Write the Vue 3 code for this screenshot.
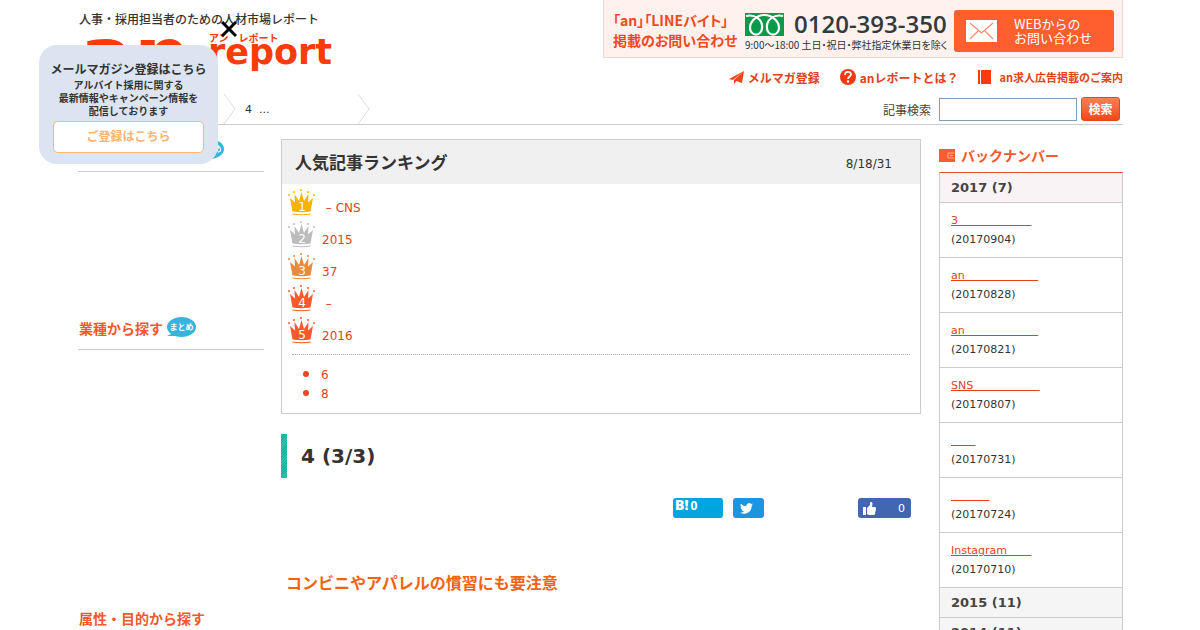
<script setup>
const pad = (n) => '\u00a0'.repeat(n)

const ranking = [
  { n: 1, text: '\u00a0– CNS', color: '#f9b200' },
  { n: 2, text: '2015', color: '#bcbcbc' },
  { n: 3, text: '37', color: '#e98a3c' },
  { n: 4, text: '\u00a0–', color: '#f95a2b' },
  { n: 5, text: '2016', color: '#f95a2b' },
]
const others = ['6', '8']
const issues = [
  { text: '3' + pad(21), date: '(20170904)' },
  { text: 'an' + pad(21), date: '(20170828)' },
  { text: 'an' + pad(21), date: '(20170821)' },
  { text: 'SNS' + pad(19), date: '(20170807)' },
  { text: pad(7), date: '(20170731)' },
  { text: pad(11), date: '(20170724)' },
  { text: 'Instagram' + pad(7), date: '(20170710)' },
]
const dots = [[1, 6], [6, 3], [13, 1], [20, 3], [26, 6]]
</script>

<template>
  <div class="page">
    <header class="header">
      <div class="brand">
        <p class="tagline">人事・採用担当者のための人材市場レポート</p>
        <a class="logo" href="#" aria-label="an report">
          <span class="logo-an">an</span>
          <span class="logo-side">
            <span class="logo-kana"><span>アン</span><span>レポート</span></span>
            <span class="logo-report">report</span>
          </span>
        </a>
      </div>
      <div class="header-right">
        <div class="contact">
          <p class="contact-lead">「an」「LINEバイト」<br>掲載のお問い合わせ</p>
          <div class="phone">
            <div class="phone-line">
              <svg width="39" height="23" viewBox="0 0 39 23" aria-hidden="true">
                <rect width="39" height="23" fill="#0a9a4a" />
                <path d="M1 3C9 1 18 6 17 15a5.500 6 0 0 1-12 0C5 8 12 2 19.500 2S34 8 34 15a5.500 6 0 0 1-12 0C21 6 30 1 38 3" fill="none" stroke="#fff" stroke-width="2.200" />
              </svg>
              <span class="phone-number">0120-393-350</span>
            </div>
            <p class="hours"><span>9:00〜18:00</span><span>土日・祝日・弊社指定休業日を除く</span></p>
          </div>
          <a class="web" href="#">
            <svg width="31" height="22" viewBox="0 0 31 22" aria-hidden="true">
              <rect width="31" height="22" fill="#fff" />
              <path d="M4 3l11.500 10L27 3M4 19l8-8M27 19l-8-8" fill="none" stroke="#f58a6c" stroke-width="1.200" />
            </svg>
            <span>WEBからの<br>お問い合わせ</span>
          </a>
        </div>
        <nav class="nav">
          <a href="#">
            <svg width="15" height="13" viewBox="0 0 15 13" aria-hidden="true">
              <path d="M15 0L0 8l4 1zM15 0L5 9v4l2.500-3L13 12z" fill="#f0441a" />
            </svg>
            メルマガ登録
          </a>
          <a href="#">
            <svg width="16" height="16" viewBox="0 0 16 16" aria-hidden="true">
              <circle cx="8" cy="8" r="8" fill="#f0380c" />
              <path d="M5 6c0-4 6-4 6-.5C11 7.500 8 7.500 8 10" fill="none" stroke="#fff" stroke-width="1.800" />
              <circle cx="8" cy="12.500" r="1.200" fill="#fff" />
            </svg>
            anレポートとは？
          </a>
          <a class="small" href="#">
            <svg width="13" height="14" viewBox="0 0 13 14" aria-hidden="true">
              <path d="M0 0h2v14H0zM3 0h10v14H3z" fill="#f93c0a" />
            </svg>
            an求人広告掲載のご案内
          </a>
        </nav>
      </div>
    </header>

    <div class="subbar">
      <nav class="crumbs" aria-label="breadcrumb">
        <svg width="13" height="30" viewBox="0 0 13 30" aria-hidden="true"><path d="M1 0l11 15L1 30" /></svg>
        <span class="crumb">4&nbsp; ...</span>
        <svg width="13" height="30" viewBox="0 0 13 30" aria-hidden="true"><path d="M1 0l11 15L1 30" /></svg>
      </nav>
      <form class="search" @submit.prevent>
        <label for="q">記事検索</label>
        <input id="q" type="text">
        <button type="submit">検索</button>
      </form>
    </div>

    <div class="columns">
      <aside class="left">
        <div class="finder first">
          <span class="bubble">まとめ</span>
        </div>
        <div class="finder second">
          <h2>業種から探す</h2>
          <span class="bubble">まとめ</span>
        </div>
        <div class="finder third">
          <h2>属性・目的から探す</h2>
        </div>
      </aside>

      <main class="main">
        <section class="ranking">
          <div class="ranking-head">
            <h2>人気記事ランキング</h2>
            <span>8/18/31</span>
          </div>
          <ol class="crowns">
            <li v-for="r in ranking" :key="r.n">
              <svg width="28" height="27" viewBox="0 0 28 27" :fill="r.color" aria-hidden="true">
                <circle v-for="d in dots" :key="d[0]" :cx="d[0]" :cy="d[1]" r="1" />
                <path d="M2 9l5 4.500L6.500 5l4.500 7L13.500 3 16 12l4.500-7-.5 8.500L25 9l-2.500 13.500q-9 1.500-18 0z" />
                <path d="M4.500 24.500q9 1.500 18 0v1q-9 1.500-18 0z" />
                <text x="14" y="22" text-anchor="middle">{{ r.n }}</text>
              </svg>
              <a href="#">{{ r.text }}</a>
            </li>
          </ol>
          <ul class="others">
            <li v-for="o in others" :key="o"><a href="#">{{ o }}</a></li>
          </ul>
        </section>

        <h1 class="title">4 (3/3)</h1>

        <div class="share">
          <button class="hatena" type="button"><b>B!</b><span>0</span></button>
          <button class="twitter" type="button" aria-label="Twitter">
            <svg width="13" height="11" viewBox="0 0 24 20" fill="#fff" aria-hidden="true">
              <path d="M24 2.400a10 10 0 0 1-2.800.8A5 5 0 0 0 23.300.5a10 10 0 0 1-3.100 1.200A4.900 4.900 0 0 0 11.800 6 14 14 0 0 1 1.700 1a4.900 4.900 0 0 0 1.500 6.600A5 5 0 0 1 1 7a4.900 4.900 0 0 0 4 4.900 5 5 0 0 1-2.300.1 4.900 4.900 0 0 0 4.600 3.400A10 10 0 0 1 0 17.500 14 14 0 0 0 21.500 5 10 10 0 0 0 24 2.400z" />
            </svg>
          </button>
          <button class="facebook" type="button" aria-label="Like 0">
            <svg width="13" height="13" viewBox="0 0 13 13" fill="#fff" aria-hidden="true">
              <path d="M0 5h3v8H0zM4 6l3-3V1c0-1.500 2.500-1.200 2.500 1L9 5h3q1 .2 1 1.500L12 12q-.3 1-1.500 1H6l-2-1z" />
            </svg>
            <span>0</span>
          </button>
        </div>

        <h2 class="lead">コンビニやアパレルの慣習にも要注意</h2>
      </main>

      <aside class="right">
        <h2>
          <svg width="16" height="13" viewBox="0 0 16 13" aria-hidden="true">
            <path d="M0 0h16v13H0z" fill="#fa5c32" />
            <path d="M15 4H9v5h6M11 6.500h3" fill="none" stroke="#fdb49a" />
          </svg>
          バックナンバー
        </h2>
        <div class="archive">
          <h3 class="current">2017 (7)</h3>
          <ul>
            <li v-for="i in issues" :key="i.date">
              <a href="#">{{ i.text }}</a>
              <span>{{ i.date }}</span>
            </li>
          </ul>
          <h3>2015 (11)</h3>
          <h3>2014 (11)</h3>
        </div>
      </aside>
    </div>

    <div class="popup">
      <button class="close" type="button" aria-label="閉じる">
        <svg width="16" height="16" viewBox="0 0 16 16" aria-hidden="true"><path d="M1 1l14 14M15 1L1 15" stroke="#000" stroke-width="3" /></svg>
      </button>
      <p class="popup-title">メールマガジン登録はこちら</p>
      <p class="popup-text">アルバイト採用に関する<br>最新情報やキャンペーン情報を<br>配信しております</p>
      <a class="popup-button" href="#">ご登録はこちら</a>
    </div>
  </div>
</template>

<style>
body {
  background: #fff;
}
</style>

<style scoped>
* {
  box-sizing: border-box;
  margin: 0;
  padding: 0;
}
.page {
  position: relative;
  height: 100vh;
  overflow: hidden;
  padding: 0 77px 0 78px;
  color: #333;
  font-family: "DejaVu Sans", "Noto Sans CJK JP", sans-serif;
  font-size: 12px;
}
a {
  color: #e0431a;
  text-decoration: none;
}
ul,
ol {
  list-style: none;
}
button {
  border: 0;
  cursor: pointer;
  font-family: inherit;
}
svg {
  flex: none;
}
.tagline,
.contact,
.nav,
.search,
.finder,
.ranking-head h2,
.lead,
.right h2,
.popup {
  font-family: "Noto Sans CJK JP", sans-serif;
}
.header {
  display: flex;
  justify-content: space-between;
  height: 94px;
}
.tagline {
  padding: 10px 0 0 1px;
  font-size: 12px;
  font-weight: 500;
  line-height: 18px;
}
.logo {
  display: flex;
  height: 50px;
  padding-left: 2px;
  color: #fa3c08;
  font-weight: bold;
}
.logo-an {
  width: 128px;
  font-size: 80px;
  line-height: 58px;
}
.logo-side {
  padding-top: 3px;
}
.logo-kana {
  display: flex;
  gap: 10px;
  padding-left: 1px;
  font-family: "Noto Sans CJK JP", sans-serif;
  font-size: 10px;
  line-height: 14px;
}
.logo-report {
  display: block;
  margin-top: -13px;
  font-size: 35px;
  line-height: 40px;
}
.contact {
  display: flex;
  height: 58px;
  padding: 10px 8px 0 9px;
  background: #fff1ee;
  border: solid #f3d9d2;
  border-width: 0 1px 1px;
}
.contact-lead {
  width: 132px;
  color: #f04a1c;
  font-size: 14px;
  font-weight: bold;
  line-height: 20px;
  font-feature-settings: "palt";
  white-space: nowrap;
}
.phone {
  width: 209px;
}
.phone-line {
  display: flex;
  align-items: center;
  gap: 10px;
  height: 28px;
}
.phone-number {
  color: #333a3c;
  font-family: "Open Sans", sans-serif;
  font-size: 24px;
  font-weight: 600;
  line-height: 28px;
}
.hours {
  display: flex;
  gap: 2px;
  font-size: 10px;
  line-height: 14px;
  font-feature-settings: "palt";
  white-space: nowrap;
}
.web {
  display: flex;
  align-items: center;
  gap: 17px;
  width: 160px;
  height: 42px;
  padding-left: 12px;
  background: #ff5e2f;
  border-radius: 3px;
  color: #fff;
  font-size: 13px;
  line-height: 14px;
  white-space: nowrap;
}
.nav {
  display: flex;
  justify-content: flex-end;
  gap: 20px;
  height: 38px;
  align-items: center;
}
.nav a {
  display: flex;
  align-items: center;
  gap: 4px;
  font-size: 12px;
  font-weight: bold;
}
.nav .small {
  gap: 8px;
  font-size: 11px;
}
.subbar {
  display: flex;
  justify-content: space-between;
  height: 31px;
  border-bottom: 1px solid #ccc;
}
.crumbs {
  display: flex;
  align-items: center;
  padding-left: 145px;
  font-size: 11px;
}
.crumbs path {
  fill: none;
  stroke: #ddd;
}
.crumb {
  width: 121px;
  padding-left: 9px;
}
.search {
  display: flex;
  align-items: center;
  padding-right: 3px;
}
.search label {
  margin-right: 8px;
  color: #444;
}
.search input {
  width: 138px;
  height: 23px;
  margin-right: 4px;
  border: 1px solid #7f9db9;
}
.search button {
  width: 39px;
  height: 24px;
  background: linear-gradient(#fa8058, #ee4a1a);
  border: 1px solid #e2481c;
  border-radius: 3px;
  color: #fff;
  font-size: 12px;
  font-weight: bold;
  line-height: 20px;
}
.columns {
  display: grid;
  grid-template-columns: 186px minmax(0, 1fr) 184px;
  column-gap: 18px;
  padding-top: 14px;
}
.finder {
  display: flex;
  align-items: flex-start;
  gap: 4px;
  border-bottom: 1px solid #ccc;
}
.finder h2 {
  padding-left: 1px;
  color: #f4592b;
  font-size: 14px;
  line-height: 18px;
}
.first {
  height: 33px;
  padding-left: 117px;
}
.second {
  height: 178px;
  padding-top: 147px;
}
.third {
  height: 290px;
  padding-top: 259px;
}
.bubble {
  position: relative;
  width: 29px;
  height: 20px;
  background: #35b4dc;
  border-radius: 50%;
  color: #fff;
  font-size: 8px;
  font-weight: bold;
  line-height: 19px;
  text-align: center;
}
.bubble::before {
  position: absolute;
  bottom: 1px;
  left: 0;
  border: solid transparent;
  border-width: 3px 0 1px 8px;
  border-bottom: 4px solid #35b4dc;
  content: "";
}
.second .bubble {
  margin-top: -2px;
}
.main {
  margin-left: -1px;
}
.ranking {
  height: 275px;
  border: 1px solid #ccc;
}
.ranking-head {
  display: flex;
  align-items: center;
  justify-content: space-between;
  height: 44px;
  padding: 0 28px 0 13px;
  background: #f0f0f0;
}
.ranking-head h2 {
  padding-bottom: 2px;
  font-size: 17px;
  font-weight: bold;
}
.ranking-head span {
  padding-top: 4px;
}
.crowns {
  margin: 0 10px;
  padding: 5px 0;
  border-bottom: 1px dotted #aaa;
}
.crowns li {
  display: flex;
  gap: 6px;
  height: 32px;
  margin-left: -4px;
}
.crowns a {
  padding-top: 4px;
  line-height: 30px;
}
.crowns text {
  fill: #fff;
  font-size: 12px;
}
.others {
  padding: 10px 0 0 21px;
}
.others li {
  display: flex;
  align-items: center;
  height: 19px;
}
.others li::before {
  width: 6px;
  height: 6px;
  margin: 0 12px 2px 0;
  background: #e8481c;
  border-radius: 50%;
  content: "";
}
.title {
  position: relative;
  margin-top: 20px;
  padding-left: 20px;
  font-size: 20px;
  line-height: 44px;
}
.title::before {
  position: absolute;
  inset: 0 auto 0 0;
  width: 6px;
  background: repeating-linear-gradient(135deg, #10b39c 0 1px, #35c2ac 1px 2px);
  content: "";
}
.share {
  display: flex;
  justify-content: flex-end;
  margin-top: 20px;
  padding-right: 10px;
  color: #fff;
}
.share button {
  display: flex;
  align-items: center;
  height: 20px;
  border-radius: 3px;
  color: #fff;
}
.share .hatena {
  align-items: flex-start;
  gap: 2px;
  width: 50px;
  margin-right: 10px;
  padding-left: 2px;
  background: #00a4de;
  font-family: "Open Sans", sans-serif;
  font-size: 12px;
  font-weight: bold;
  line-height: 15px;
}
.hatena b {
  font-size: 14px;
  line-height: 13px;
}
.twitter {
  width: 31px;
  margin-right: 94px;
  padding-left: 7px;
  background: #1b95e0;
}
.facebook {
  justify-content: space-between;
  width: 53px;
  padding: 0 6px 0 5px;
  background: #4267b2;
  font-size: 11px;
}
.lead {
  margin-top: 52px;
  padding-left: 5px;
  color: #f2630f;
  font-size: 16px;
  line-height: 24px;
}
.right h2 {
  display: flex;
  align-items: center;
  gap: 6px;
  height: 33px;
  padding-bottom: 1px;
  color: #f4592b;
  font-size: 14px;
}
.archive {
  border: solid #ccc;
  border-width: 0 1px;
  border-top: 1px solid #d9502a;
}
.archive h3 {
  height: 30px;
  padding-left: 11px;
  background: #f5f5f5;
  border-bottom: 1px solid #ccc;
  color: #444;
  font-size: 13px;
  line-height: 29px;
}
.archive .current {
  background: #faf3f6;
}
.archive li {
  height: 55px;
  padding: 8px 0 0 11px;
  border-bottom: 1px solid #ccc;
  font-size: 11px;
  line-height: 19px;
}
.archive a {
  text-decoration: underline;
}
.archive li span {
  display: block;
}
.popup {
  position: absolute;
  top: 45px;
  left: 39px;
  width: 179px;
  height: 119px;
  padding: 15px 14px 0;
  background: #dbe4f0;
  border-radius: 18px;
  text-align: center;
  white-space: nowrap;
}
.close {
  position: absolute;
  top: -24px;
  right: -19px;
  width: 16px;
  height: 16px;
  background: none;
}
.popup-title,
.popup-text {
  display: flex;
  justify-content: center;
  font-size: 12px;
  font-weight: bold;
  line-height: 18px;
}
.popup-text {
  display: block;
  font-size: 10px;
  line-height: 13px;
}
.popup-button {
  display: block;
  height: 32px;
  margin-top: 4px;
  background: #fff;
  border: 1px solid #f8b878;
  border-radius: 5px;
  color: #f8b470;
  font-size: 12px;
  font-weight: bold;
  line-height: 28px;
}
</style>
